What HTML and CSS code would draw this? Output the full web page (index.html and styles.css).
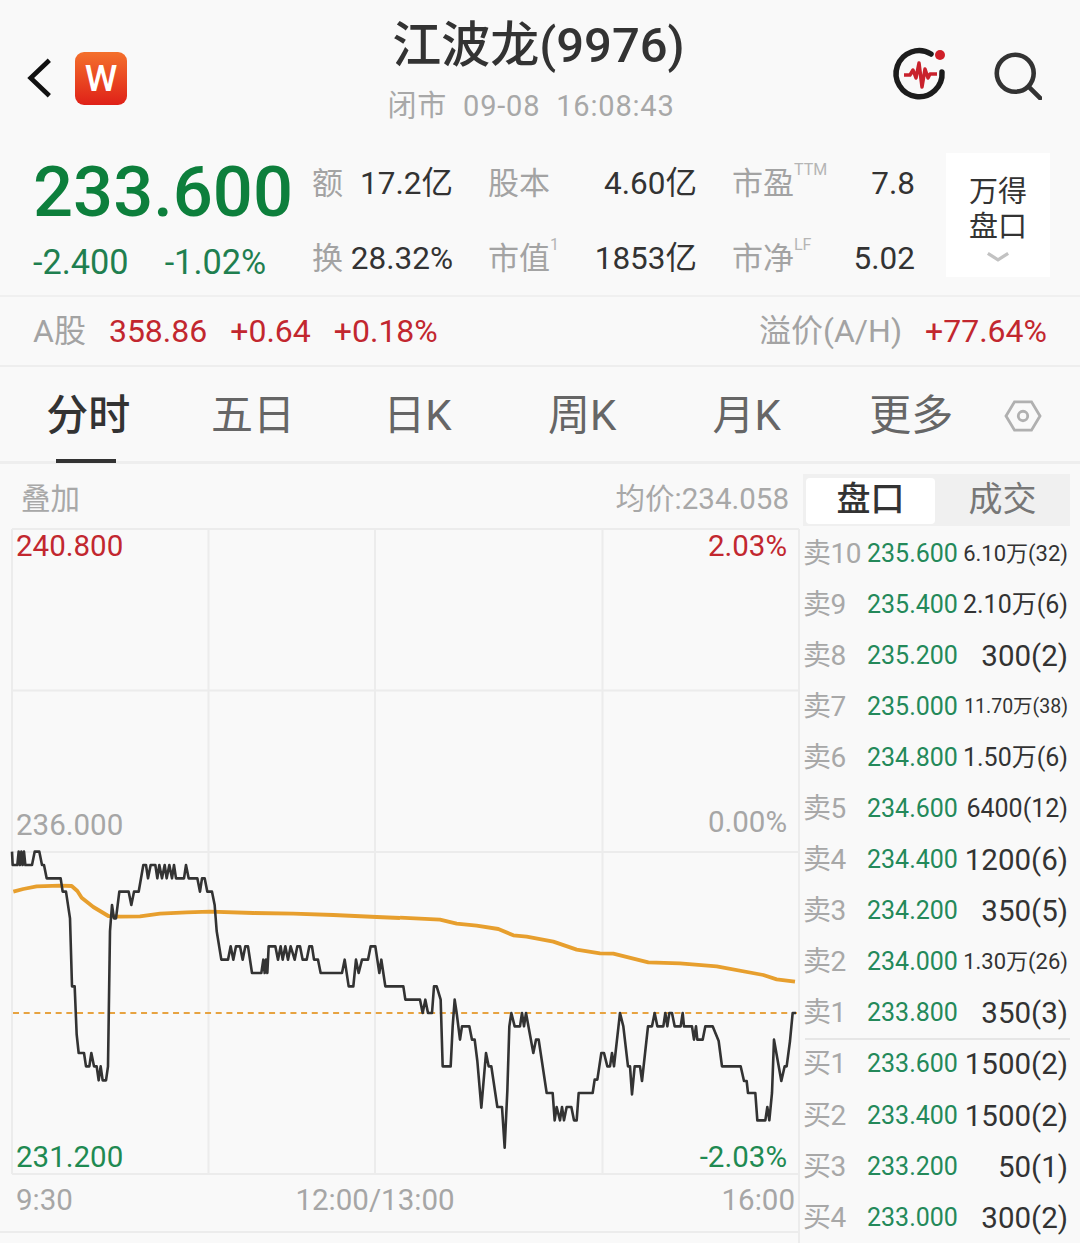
FILE: index.html
```html
<!DOCTYPE html>
<html lang="zh-CN">
<head>
<meta charset="utf-8">
<title>江波龙(9976)</title>
<link rel="stylesheet" href="styles.css">
</head>
<body>
<div class="page">
  <header class="topbar">
    <div class="top-left">
      <svg class="back" viewBox="0 0 30 46"><path d="M25 4 L5 23 L25 42"/></svg>
      <div class="logo">W</div>
    </div>
    <div class="top-center">
      <div class="title">江波龙(9976)</div>
      <div class="subtitle">闭市&nbsp; 09-08&nbsp; 16:08:43</div>
    </div>
    <div class="top-right">
      <svg class="monitor" viewBox="0 0 60 60">
        <path class="ring" d="M41 9 A23 23 0 1 0 52 27"/>
        <circle class="dot" cx="50" cy="10" r="5"/>
        <path class="pulse" d="M14 30 H20 L23 25 L26 33 L29 18 L32 42 L35 24 L38 33 L40 29 H47"/>
      </svg>
      <svg class="search" viewBox="0 0 52 52"><circle cx="23" cy="23" r="20"/><path d="M38 38 L50 50"/></svg>
    </div>
  </header>

  <section class="quote">
    <div class="price-block">
      <div class="price">233.600</div>
      <div class="changes"><span>-2.400</span><span>-1.02%</span></div>
    </div>
    <div class="stats">
      <div class="stat"><span class="stat-label">额</span><span>17.2亿</span></div>
      <div class="stat"><span class="stat-label">股本</span><span>4.60亿</span></div>
      <div class="stat"><span class="stat-label">市盈<span class="sup">TTM</span></span><span>7.8</span></div>
      <div class="stat"><span class="stat-label">换</span><span>28.32%</span></div>
      <div class="stat"><span class="stat-label">市值<span class="sup">1</span></span><span>1853亿</span></div>
      <div class="stat"><span class="stat-label">市净<span class="sup">LF</span></span><span>5.02</span></div>
    </div>
    <div class="wind-btn">
      <span>万得</span><span>盘口</span>
      <svg class="chev" viewBox="0 0 26 12"><path d="M2 2 L13 9 L24 2"/></svg>
    </div>
  </section>

  <section class="ah">
    <div class="ah-left"><span class="ah-label">A股</span><span class="red">358.86</span><span class="red">+0.64</span><span class="red">+0.18%</span></div>
    <div class="ah-right"><span class="ah-label">溢价(A/H)</span><span class="red">+77.64%</span></div>
  </section>

  <nav class="tabs">
    <div class="tab active">分时</div>
    <div class="tab">五日</div>
    <div class="tab">日K</div>
    <div class="tab">周K</div>
    <div class="tab">月K</div>
    <div class="tab">更多</div>
    <svg class="hex" viewBox="0 0 40 36"><path d="M11 3 H29 L38 18 L29 33 H11 L2 18 Z"/><circle cx="20" cy="18" r="5"/></svg>
  </nav>

  <main class="body">
    <div class="chart-col">
      <div class="chart-head"><span>叠加</span><span>均价:234.058</span></div>
      <div class="plot">
        <svg class="plot-svg" viewBox="0 527 800 716">
          <g class="grid">
            <path d="M12 528 V1173 M208.500 528 V1173 M375 528 V1173 M602.500 528 V1173 M799 528 V1243"/>
            <path d="M12 528 H799 M12 689.500 H799 M12 851 H799 M12 1173 H799 M0 1231 H799"/>
          </g>
          <path class="dash" d="M13 1012 H797"/>
          <g transform="translate(0 840) scale(.33333)">
            <polyline class="avg" points="40,152 70,144 110,136 180,134 215,135 232,150 245,170 280,198 325,225 360,227 420,226 480,218 560,214 630,212 760,216 880,218 1000,222 1130,228 1200,231"/>
            <polyline class="line" points="36,32 38,72 52,72 56,32 60,72 64,32 68,72 72,32 76,72 96,72 104,32 118,32 126,72 132,72 140,112 182,112 188,152 198,152 210,232 216,436 224,436 230,580 236,636 252,636 258,676 268,676 274,636 282,676 290,676 296,718 302,676 308,718 318,718 324,676 330,270 336,192 342,232 348,232 358,152 386,152 394,192 402,152 416,152 430,72 438,72 444,112 452,72 466,72 472,112 478,72 486,112 494,72 500,112 508,72 516,112 522,72 528,112 552,112 558,72 566,112 592,112 600,152 606,112 614,112 622,152 636,152 644,192 650,270 664,356 684,356 692,316 700,356 708,316 720,316 728,356 736,316 744,316 756,396 784,396 790,356 794,396 798,356 802,396 806,316 826,316 834,356 842,316 848,356 856,316 864,356 872,316 884,356 892,316 900,316 908,356 920,356 928,316 936,316 942,356 954,356 962,396 1026,396 1034,356 1046,436 1060,436 1068,356 1076,396 1086,356 1104,356 1112,316 1126,316 1138,396 1144,356 1150,396 1156,436 1200,436"/>
          </g>
          <g transform="translate(400 900) scale(.33333)">
            <polyline class="avg" points="0,50 120,56 170,68 230,74 295,84 340,103 380,107 460,122 530,146 600,157 640,158 745,184 840,187 950,196 1090,222 1130,235 1185,242"/>
            <polyline class="line" points="0,256 10,256 16,296 60,296 68,336 76,296 84,336 96,336 102,256 110,256 122,296 128,496 152,496 158,376 164,296 170,336 180,416 186,376 208,376 216,416 224,416 232,480 244,620 258,456 266,496 274,496 292,618 306,618 314,740 322,570 328,376 334,336 344,376 360,376 366,336 372,376 378,336 400,456 408,416 416,416 440,576 458,576 464,658 470,618 480,658 486,618 492,658 500,618 514,618 522,658 530,658 536,576 578,576 584,536 592,536 604,456 612,456 622,496 630,496 636,456 642,496 660,336 670,376 684,496 690,496 696,580 704,496 720,496 726,540 744,376 756,376 764,336 772,376 790,376 796,336 802,376 808,336 816,336 824,376 842,376 848,336 852,376 876,376 882,416 888,376 892,416 908,416 916,376 938,376 956,420 966,496 1022,496 1032,540 1040,540 1044,576 1066,576 1072,658 1096,658 1102,618 1108,658 1116,576 1122,416 1144,540 1154,496 1160,496 1170,420 1178,336 1188,336"/>
          </g>
        </svg>
        <span class="lbl l-hi red">240.800</span>
        <span class="lbl r-hi red">2.03%</span>
        <span class="lbl l-mid grey">236.000</span>
        <span class="lbl r-mid grey">0.00%</span>
        <span class="lbl l-lo green">231.200</span>
        <span class="lbl r-lo green">-2.03%</span>
        <span class="lbl x-a grey">9:30</span>
        <span class="lbl x-b grey">12:00/13:00</span>
        <span class="lbl x-c grey">16:00</span>
      </div>
    </div>
    <aside class="depth">
      <div class="seg"><div class="seg-item on">盘口</div><div class="seg-item">成交</div></div>
      <div class="rows">
        <div class="row"><span class="side">卖10</span><span class="p">235.600</span><span class="v v-md">6.10万(32)</span></div>
        <div class="row"><span class="side">卖9</span><span class="p">235.400</span><span class="v v-lg">2.10万(6)</span></div>
        <div class="row"><span class="side">卖8</span><span class="p">235.200</span><span class="v v-xl">300(2)</span></div>
        <div class="row"><span class="side">卖7</span><span class="p">235.000</span><span class="v v-sm">11.70万(38)</span></div>
        <div class="row"><span class="side">卖6</span><span class="p">234.800</span><span class="v v-lg">1.50万(6)</span></div>
        <div class="row"><span class="side">卖5</span><span class="p">234.600</span><span class="v v-lg">6400(12)</span></div>
        <div class="row"><span class="side">卖4</span><span class="p">234.400</span><span class="v v-xl">1200(6)</span></div>
        <div class="row"><span class="side">卖3</span><span class="p">234.200</span><span class="v v-xl">350(5)</span></div>
        <div class="row"><span class="side">卖2</span><span class="p">234.000</span><span class="v v-md">1.30万(26)</span></div>
        <div class="row split"><span class="side">卖1</span><span class="p">233.800</span><span class="v v-xl">350(3)</span></div>
        <div class="row"><span class="side">买1</span><span class="p">233.600</span><span class="v v-xl">1500(2)</span></div>
        <div class="row"><span class="side">买2</span><span class="p">233.400</span><span class="v v-xl">1500(2)</span></div>
        <div class="row"><span class="side">买3</span><span class="p">233.200</span><span class="v v-xl">50(1)</span></div>
        <div class="row"><span class="side">买4</span><span class="p">233.000</span><span class="v v-xl">300(2)</span></div>
      </div>
    </aside>
  </main>
</div>
</body>
</html>
```
FILE: styles.css
```css
* { box-sizing: border-box; }
html, body { margin: 0; padding: 0; }
body {
  width: 1080px;
  height: 1243px;
  overflow: hidden;
  background: #f9f9f9;
  color: #333;
  font-family: Roboto, "Noto Sans CJK SC", sans-serif;
}
.page { display: flex; flex-direction: column; height: 1243px; }
.red { color: #c2272f; }
.green { color: #1f8a52; }
.grey { color: #a6a6a6; }

/* top bar */
.topbar {
  height: 150px;
  display: grid;
  grid-template-columns: 1fr auto 1fr;
  padding: 15px 38px 0 26px;
}
.top-left { display: flex; align-items: center; gap: 21px; height: 120px; padding-top: 6px; }
.back { width: 28px; height: 44px; fill: none; stroke: #111; stroke-width: 5; }
.logo {
  width: 52px; height: 53px; border-radius: 9px;
  background: linear-gradient(#f4702c, #df2118);
  color: #fff; font-size: 37px; font-weight: 500; line-height: 53px; text-align: center;
}
.top-center { display: flex; flex-direction: column; align-items: center; }
.title { font-size: 49px; line-height: 62px; font-weight: 500; color: #333; margin-left: 9px; }
.subtitle { font-size: 29px; line-height: 40px; margin: 9px 6px 0 0; color: #a8a8a8; letter-spacing: 0.8px; }
.top-right { display: flex; justify-content: flex-end; align-items: center; gap: 44px; height: 120px; }
.monitor { width: 60px; height: 60px; fill: none; }
.ring { stroke: #1c1c1c; stroke-width: 5.5; stroke-linecap: round; }
.dot { fill: #d0202a; }
.pulse { stroke: #c9222c; stroke-width: 3.5; stroke-linejoin: round; }
.search { width: 48px; height: 48px; margin-top: 1px; fill: none; stroke: #333; stroke-width: 5; stroke-linecap: round; }

/* quote */
.quote {
  height: 147px;
  display: flex;
  border-bottom: 2px solid #f0f0f0;
  padding-left: 33px;
}
.price-block { width: 279px; display: flex; flex-direction: column; }
.price { font-size: 70.500px; line-height: 84px; color: #0d7f3c; font-weight: 500; }
.changes { display: flex; gap: 36px; font-size: 34.300px; line-height: 40px; margin-top: 8px; color: #1f7f50; }
.stats {
  width: 603px;
  display: grid;
  grid-template-columns: 141px 209px 183px;
  grid-template-rows: 75px 75px;
  column-gap: 35px;
  margin-top: -4px;
  font-size: 31.500px;
  line-height: 40px;
  color: #333;
}
.stat { display: flex; justify-content: space-between; align-items: center; }
.stat-label { position: relative; color: #a3a3a3; font-size: 31px; }
.sup { position: absolute; left: 100%; top: -3px; font-size: 16px; line-height: 18px; color: #b5b5b5; }
.wind-btn {
  width: 104px; height: 124px; margin-left: 31px; margin-top: 3px;
  background: #fff;
  display: flex; flex-direction: column; align-items: center;
  padding-top: 22px;
  font-size: 29px; line-height: 35px; color: #333;
}
.chev { width: 24px; height: 12px; margin-top: 6px; fill: none; stroke: #c2c2c2; stroke-width: 3.5; }

/* A/H */
.ah {
  height: 70px;
  display: flex; justify-content: space-between; align-items: center;
  padding: 0 33px;
  border-bottom: 2px solid #eeeeee;
  font-size: 32px;
  line-height: 40px;
}
.ah-left { display: flex; gap: 23px; }
.ah-right { display: flex; gap: 23px; }
.ah-label { color: #a3a3a3; }

/* tabs */
.tabs {
  height: 97px;
  display: grid;
  grid-template-columns: repeat(6, 164.6px) 1fr;
  align-items: center;
  padding: 0 28px 0 6px;
  border-bottom: 3px solid #eeeeee;
}
.tab { position: relative; text-align: center; font-size: 42px; line-height: 97px; color: #666; }
.tab.active { color: #333; font-weight: 500; }
.tab.active::after {
  content: ""; position: absolute; left: 50px; bottom: 1px; width: 60px; height: 4px; background: #333;
}
.hex { width: 38px; height: 34px; justify-self: center; fill: none; stroke: #b0b0b0; stroke-width: 3; }

/* body */
.body { flex: 1; display: flex; min-height: 0; }
.chart-col { width: 800px; display: flex; flex-direction: column; }
.chart-head {
  height: 64px;
  display: flex; justify-content: space-between; align-items: center;
  padding: 6px 11px 0 21px;
  color: #a8a8a8; font-size: 29.500px; line-height: 40px;
}
.plot { position: relative; flex: 1; min-height: 0; }
.plot-svg { display: block; width: 800px; height: 716px; }
.grid path { fill: none; stroke: #ececec; stroke-width: 2; }
.dash { fill: none; stroke: #e7a341; stroke-width: 2; stroke-dasharray: 6 4.67; }
.avg { fill: none; stroke: #e79f2e; stroke-width: 3.8; vector-effect: non-scaling-stroke; stroke-linejoin: round; }
.line { fill: none; stroke: #333; stroke-width: 2.6; vector-effect: non-scaling-stroke; stroke-linejoin: round; }
.lbl { position: absolute; font-size: 29.500px; line-height: 36px; white-space: nowrap; }
.l-hi { left: 16px; top: 0; }
.r-hi { right: 13px; top: 0; }
.l-mid { left: 16px; top: 279px; }
.r-mid { right: 13px; top: 276px; }
.l-lo { left: 16px; top: 611px; }
.r-lo { right: 13px; top: 611px; }
.x-a { left: 16px; top: 654px; }
.x-b { left: 375px; top: 654px; transform: translateX(-50%); }
.x-c { right: 5px; top: 654px; }

/* depth */
.depth { flex: 1; display: flex; flex-direction: column; min-width: 0; }
.seg {
  flex: none;
  height: 52px;
  margin: 10px 10px 2px 3px;
  background: #f0f0f0;
  display: grid; grid-template-columns: 129px 1fr;
  padding: 4px 0 2px 3px;
}
.seg-item { text-align: center; font-size: 34px; line-height: 43px; color: #777; }
.seg-item.on { background: #fff; color: #333; font-weight: 500; border-radius: 4px; }
.rows { flex: 1; overflow: hidden; }
.row {
  position: relative;
  height: 51.1px;
  display: grid;
  grid-template-columns: 64px 1fr auto;
  align-items: center;
  padding: 0 12px 0 3px;
  line-height: 36px;
}
.row.split::after {
  content: ""; position: absolute; left: 5px; right: 10px; bottom: -1px; height: 2px; background: #e6e6e6;
}
.side { font-size: 28px; color: #a8a8a8; letter-spacing: -0.5px; white-space: nowrap; }
.p { font-size: 25px; color: #24895a; }
.v { color: #333; white-space: nowrap; }
.v-xl { font-size: 29.500px; }
.v-lg { font-size: 25px; }
.v-md { font-size: 22px; }
.v-sm { font-size: 19.500px; }
```
